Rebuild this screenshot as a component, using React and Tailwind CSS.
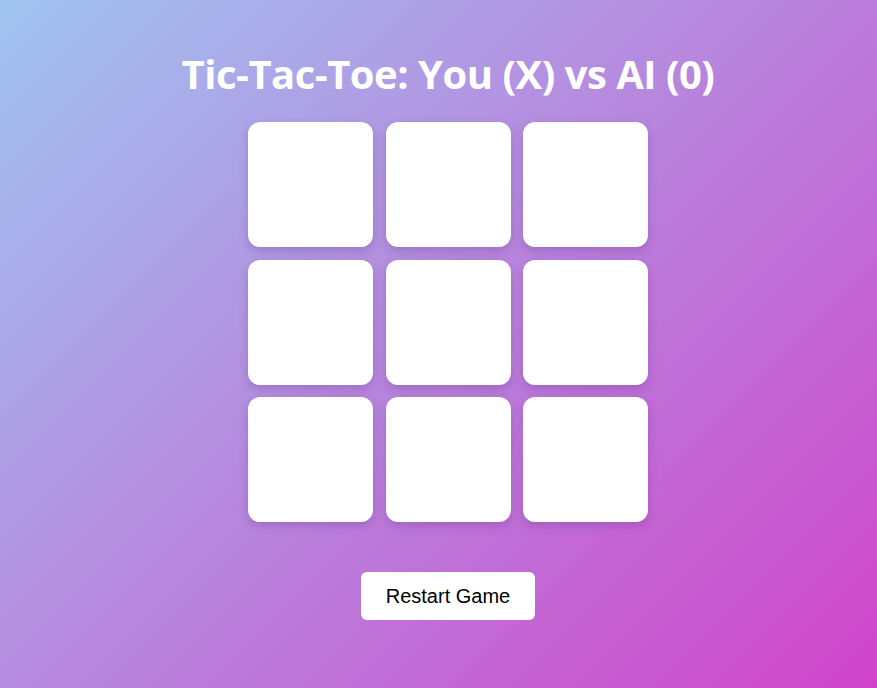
const App = () => {
  const cells = Array(9).fill(null);

  return (
    <div className="min-h-[688px] w-full bg-[linear-gradient(135deg,#a0c4f0,#d044ca)] pl-[19px] flex flex-col items-center">
      <h1 className="mt-[50px] text-[40px] leading-[48px] font-bold text-white font-['Open_Sans',sans-serif] tracking-[-0.5px]">
        Tic-Tac-Toe: You (X) vs AI (0)
      </h1>
      <div className="mt-[24px] grid grid-cols-3 gap-[12.5px] w-[400px]">
        {cells.map((cell, i) => (
          <button
            key={i}
            className="w-[125px] h-[125px] bg-white rounded-[12px] shadow-[0_4px_10px_rgba(80,40,120,0.25)]"
          >
            {cell}
          </button>
        ))}
      </div>
      <button className="mt-[50px] w-[174px] h-[48px] bg-white rounded-[6px] text-[20px] text-black font-['Liberation_Sans',Arial,sans-serif]">
        Restart Game
      </button>
    </div>
  );
};

export default App;
